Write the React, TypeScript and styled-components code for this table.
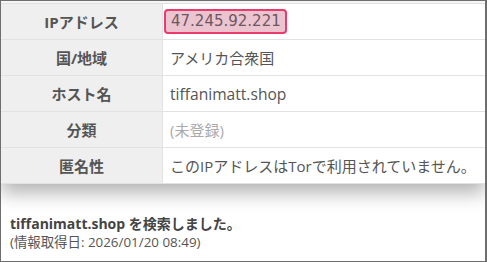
import { Fragment } from 'react';
import styled, { createGlobalStyle } from 'styled-components';

const Global = createGlobalStyle`
  html, body {
    margin: 0;
    padding: 0;
    background: #fff;
  }
  body {
    font-family: "Open Sans", "Noto Sans CJK JP", sans-serif;
    color: #555;
  }
`;

const Frame = styled.div`
  width: 487px;
  height: 262px;
  box-sizing: border-box;
  border: 1px solid #6e6e6e;
  border-right-width: 2px;
  padding-top: 2px;
  overflow: hidden;
  background: #fff;
`;

const Table = styled.div`
  display: grid;
  grid-template-columns: 162px 1fr;
  border-top: 1px solid #e2e2e2;
  box-shadow: 0 9px 18px rgba(0, 0, 0, 0.3);
`;

const Label = styled.div`
  height: 35px;
  display: flex;
  align-items: center;
  justify-content: center;
  background: #efefef;
  border-bottom: 1px solid #e2e2e2;
  border-right: 1px solid #e2e2e2;
  font-weight: 700;
  font-size: 15px;
  color: #555;
`;

const Value = styled.div<{ $muted?: boolean }>`
  height: 35px;
  display: flex;
  align-items: center;
  padding-left: 7px;
  background: #fff;
  border-bottom: 1px solid #e2e2e2;
  font-size: 15px;
  white-space: nowrap;
  color: ${p => (p.$muted ? '#aaa' : '#555')};
`;

const Host = styled.span`
  font-size: 15.6px;
`;

const IpBadge = styled.span`
  margin-left: -6px;
  padding: 2px 4px 2px 5px;
  background: #ecc4d0;
  border: 2px solid #ec3a6c;
  border-radius: 4px;
  color: #6e5660;
  font-family: "DejaVu Sans", "Open Sans", sans-serif;
  font-size: 15px;
  line-height: 17px;
`;

const Footer = styled.div`
  padding: 30px 0 0 9px;
`;

const Searched = styled.div`
  font-weight: 700;
  font-size: 14px;
  color: #444;
  line-height: 19px;
`;

const Fetched = styled.div`
  font-size: 13.4px;
  color: #555;
  line-height: 19px;
`;

type Row = { label: string; value: string; kind?: 'ip' | 'host' | 'muted' };

const rows: Row[] = [
  { label: 'IPアドレス', value: '47.245.92.221', kind: 'ip' },
  { label: '国/地域', value: 'アメリカ合衆国' },
  { label: 'ホスト名', value: 'tiffanimatt.shop', kind: 'host' },
  { label: '分類', value: '(未登録)', kind: 'muted' },
  { label: '匿名性', value: 'このIPアドレスはTorで利用されていません。' },
];

export default function App() {
  return (
    <>
      <Global />
      <Frame>
        <Table>
          {rows.map(r => (
            <Fragment key={r.label}>
              <Label>{r.label}</Label>
              <Value $muted={r.kind === 'muted'}>
                {r.kind === 'ip' ? (
                  <IpBadge>{r.value}</IpBadge>
                ) : r.kind === 'host' ? (
                  <Host>{r.value}</Host>
                ) : (
                  r.value
                )}
              </Value>
            </Fragment>
          ))}
        </Table>
        <Footer>
          <Searched>tiffanimatt.shop を検索しました。</Searched>
          <Fetched>(情報取得日: 2026/01/20 08:49)</Fetched>
        </Footer>
      </Frame>
    </>
  );
}
